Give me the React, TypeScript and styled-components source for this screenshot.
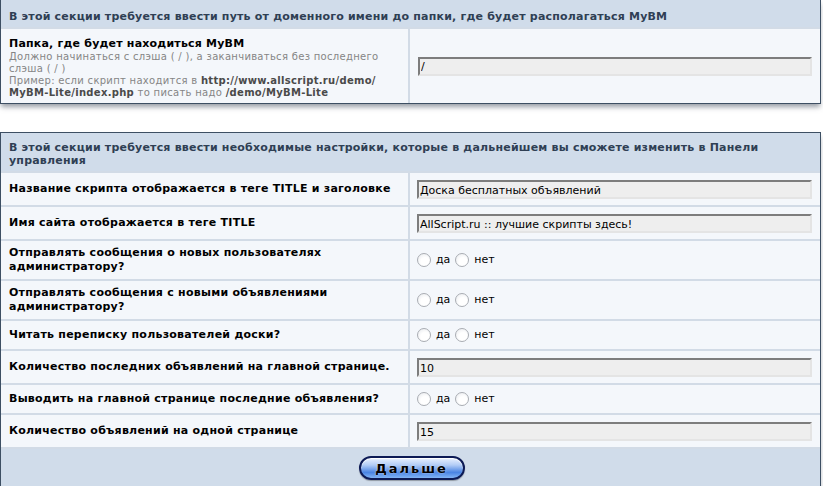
import { Fragment } from 'react';
import styled, { createGlobalStyle } from 'styled-components';

const GlobalStyle = createGlobalStyle`
  body {
    margin: 0;
    background: #ffffff;
    font-family: "DejaVu Sans", Verdana, sans-serif;
    font-size: 11px;
    color: #000;
  }
`;

const Page = styled.div`
  display: flex;
  flex-direction: column;
  gap: 28px;
  width: 821px;
  margin-top: -1px;
`;

const Panel = styled.div`
  display: grid;
  grid-template-columns: 407px 1fr;
  gap: 2px;
  background: #d2dbe6;
  border: 1px solid #3d4f63;
  box-shadow: 0 4px 5px -1px rgba(70, 80, 95, 0.55);
`;

const Header = styled.div<{ $first?: boolean }>`
  grid-column: 1 / -1;
  background: #d0dcea;
  color: #2f3f54;
  font-weight: bold;
  letter-spacing: 0.2px;
  line-height: 13px;
  padding: ${(p) => (p.$first ? '10px 8px 4px' : '8px 8px 4px')};
`;

const Cell = styled.div<{ $pad?: string }>`
  display: flex;
  flex-direction: column;
  justify-content: center;
  background: #f4f7fb;
  padding: ${(p) => p.$pad ?? '7px 8px'};
`;

const Label = styled.div`
  font-weight: bold;
  letter-spacing: 0.25px;
  line-height: 14px;
`;

const Title = styled.div`
  font-weight: bold;
  letter-spacing: 0.2px;
  line-height: 14px;
`;

const Hint = styled.div`
  color: #858585;
  font-size: 10px;
  letter-spacing: 0.3px;
  line-height: 12px;
  b {
    color: #4a4a4a;
  }
`;

const Field = styled.input`
  box-sizing: border-box;
  width: 100%;
  height: 19px;
  margin: 0;
  padding: 1px 1px 0;
  background: #eeeeee;
  border: 2px solid;
  border-color: #7d7d7d #e4e4e4 #e4e4e4 #7d7d7d;
  font-family: "DejaVu Sans", Verdana, sans-serif;
  font-size: 11px;
  color: #000;
  outline: none;
`;

const RadioRow = styled.div`
  display: flex;
  align-items: center;
  gap: 5px;
  line-height: 14px;
`;

const Radio = styled.span`
  box-sizing: border-box;
  width: 14px;
  height: 14px;
  border-radius: 50%;
  border: 1px solid #a9adb3;
  background: radial-gradient(circle at 60% 65%, #ffffff 40%, #e6e8ec 100%);
`;

const Footer = styled.div`
  grid-column: 1 / -1;
  display: flex;
  justify-content: center;
  background: #d0dcea;
  padding: 7px 0 8px 2px;
`;

const NextButton = styled.button`
  box-sizing: border-box;
  width: 106px;
  height: 24px;
  border-radius: 12px;
  border: 2px solid #0c1a55;
  background: linear-gradient(#e9f1ff 0%, #b3cdf6 35%, #4a84e3 72%, #82b4f6 100%);
  box-shadow: inset 0 1px 1px #ffffff, 0 1px 1px rgba(0, 0, 0, 0.3);
  font-family: "DejaVu Sans", Verdana, sans-serif;
  font-weight: bold;
  font-size: 13px;
  letter-spacing: 2px;
  color: #000;
  padding: 0;
  text-shadow: 0 0 2px #dce8ff;
`;

type Row =
  | { label: string[]; kind: 'text'; value: string }
  | { label: string[]; kind: 'radio' };

const rows: Row[] = [
  { label: ['Название скрипта отображается в теге TITLE и заголовке'], kind: 'text', value: 'Доска бесплатных объявлений' },
  { label: ['Имя сайта отображается в теге TITLE'], kind: 'text', value: 'AllScript.ru :: лучшие скрипты здесь!' },
  { label: ['Отправлять сообщения о новых пользователях', 'администратору?'], kind: 'radio' },
  { label: ['Отправлять сообщения с новыми объявлениями', 'администратору?'], kind: 'radio' },
  { label: ['Читать переписку пользователей доски?'], kind: 'radio' },
  { label: ['Количество последних объявлений на главной странице.'], kind: 'text', value: '10' },
  { label: ['Выводить на главной странице последние объявления?'], kind: 'radio' },
  { label: ['Количество объявлений на одной странице'], kind: 'text', value: '15' },
];

const App = () => {
  return (
    <>
      <GlobalStyle />
      <Page>
        <Panel>
          <Header $first>В этой секции требуется ввести путь от доменного имени до папки, где будет располагаться MyBM</Header>
          <Cell $pad="8px 8px 4px">
            <Title>Папка, где будет находиться MyBM</Title>
            <Hint>
              Должно начинаться с слэша ( / ), а заканчиваться без последнего
              <br />
              слэша ( / )
              <br />
              Пример: если скрипт находится в <b>http://www.allscript.ru/demo/</b>
              <br />
              <b>MyBM-Lite/index.php</b> то писать надо <b>/demo/MyBM-Lite</b>
            </Hint>
          </Cell>
          <Cell>
            <Field defaultValue="/" />
          </Cell>
        </Panel>

        <Panel>
          <Header>
            В этой секции требуется ввести необходимые настройки, которые в дальнейшем вы сможете изменить в Панели
            <br />
            управления
          </Header>
          {rows.map((row, i) => (
            <Fragment key={i}>
              <Cell $pad={row.label.length > 1 ? '5px 8px' : '7px 8px'}>
                {row.label.map((line) => (
                  <Label key={line}>{line}</Label>
                ))}
              </Cell>
              <Cell $pad={row.kind === 'text' ? '7px 8px 6px 7px' : '5px 8px 5px 7px'}>
                {row.kind === 'text' ? (
                  <Field defaultValue={row.value} />
                ) : (
                  <RadioRow>
                    <Radio />
                    <span>да</span>
                    <Radio />
                    <span>нет</span>
                  </RadioRow>
                )}
              </Cell>
            </Fragment>
          ))}
          <Footer>
            <NextButton>Дальше</NextButton>
          </Footer>
        </Panel>
      </Page>
    </>
  );
};

export default App;
